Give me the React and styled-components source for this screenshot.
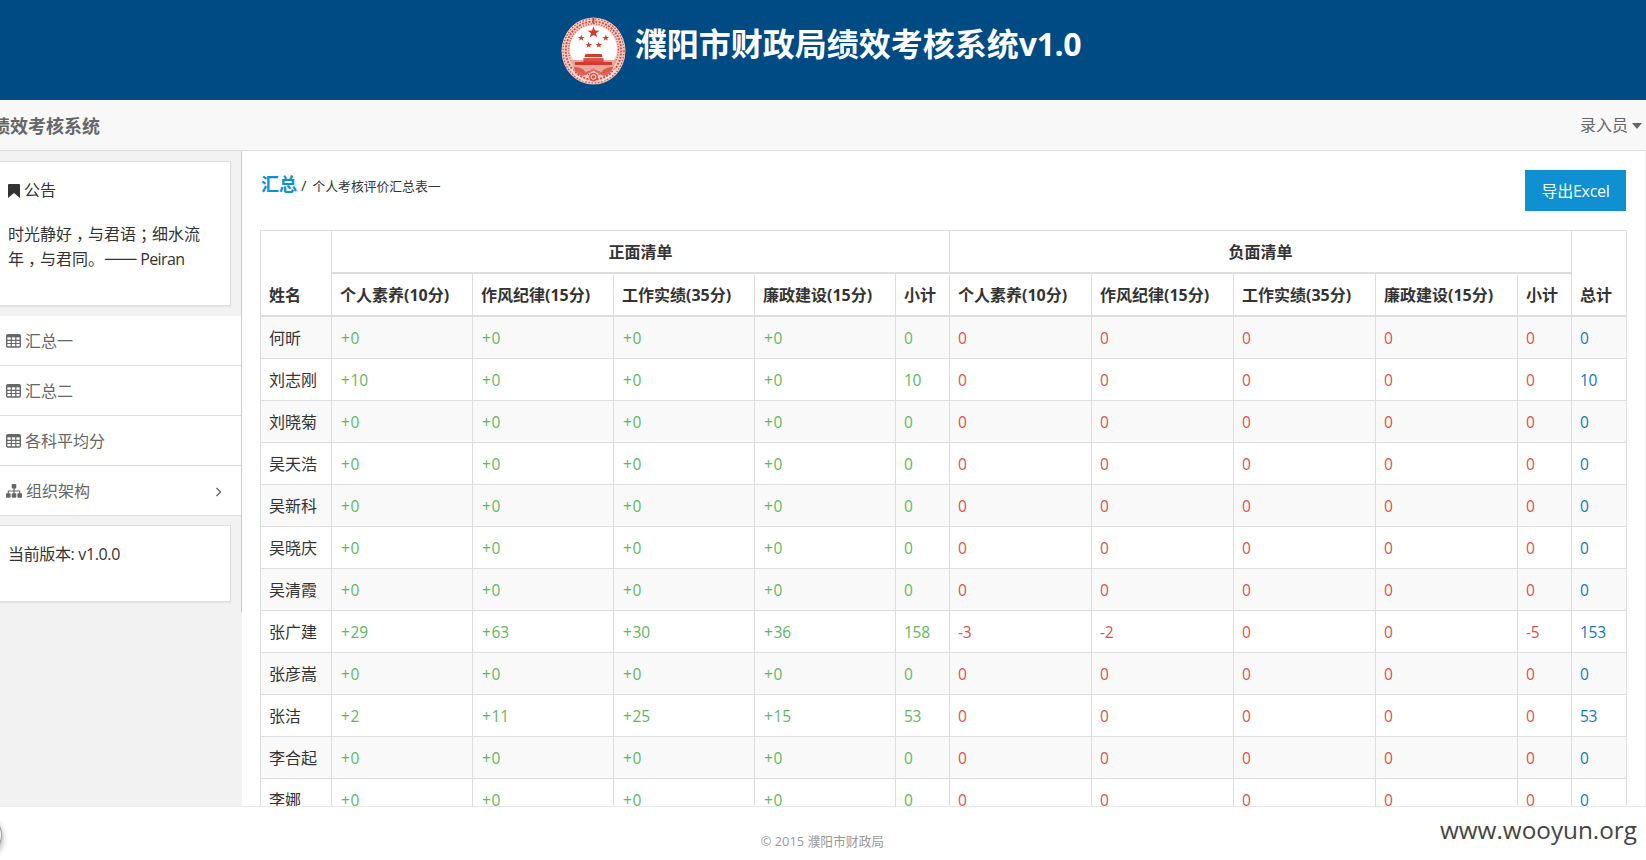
import React from 'react';
import styled, { createGlobalStyle, css } from 'styled-components';

const Global = createGlobalStyle`
  * { box-sizing: border-box; }
  body { margin: 0; background: #fff; overflow: hidden; }
  #root {
    font-family: "Open Sans", "Noto Sans CJK SC", sans-serif;
    font-size: 16px; line-height: 25.6px; color: #333;
  }
`;

const Page = styled.div`
  height: 860px; display: flex; flex-direction: column; overflow: hidden; position: relative;
`;
const Banner = styled.header`
  height: 100px; flex: none; background: #004b84; display: flex; justify-content: center;
  padding: 17px 4px 0 0; gap: 9px;
`;
const Title = styled.h1`
  margin: 1px 0 0; color: #fff; font-size: 32px; line-height: 51px; font-weight: 700;
  white-space: nowrap; height: 51px;
  span { letter-spacing: -0.4px; }
`;
const TopBar = styled.div`
  height: 51px; flex: none; display: flex; justify-content: space-between; align-items: center;
  background: #f8f8f8; border-bottom: 1px solid #ddd; color: #666; padding: 2px 4px 0 0;
`;
const Brand = styled.strong`
  font-size: 18px; margin-left: -8px; white-space: nowrap; padding-top: 1px;
`;
const UserMenu = styled.div`
  display: flex; align-items: center; gap: 4px;
`;
const Caret = styled.i`
  border: 5px solid transparent; border-top: 6px solid #666; border-bottom: 0;
`;
const Body = styled.div`
  height: 655px; flex: none; display: flex; overflow: hidden;
`;
const Sidebar = styled.aside`
  width: 242px; flex: none; background: #f2f2f2;
`;
const SideInner = styled.div`
  height: 461px; border-right: 1px solid #ccc; padding-top: 10px;
`;
const Card = styled.section`
  width: 231px; height: ${p => p.$h}px; background: #fff; border: 1px solid #ddd; border-left: 0;
  box-shadow: 0 1px 1px rgba(0,0,0,.05); padding: ${p => p.$pad}px 20px 0 8px;
  p { margin: 0; letter-spacing: ${p => p.$tight || 0}px; white-space: nowrap; }
`;
const CardTitle = styled.div`
  display: flex; align-items: center; gap: 4px; margin-bottom: 18px;
`;
const Punct = styled.span`
  padding: 0 4px; font-feature-settings: "halt";
`;
const Dash = styled.span`
  display: inline-block; width: 32px; font-family: "Noto Sans CJK SC", sans-serif;
  font-size: 20px; line-height: 16px; height: 16px; letter-spacing: 0;
`;
const Author = styled.span`
  letter-spacing: -0.6px;
`;
const Nav = styled.nav`
  margin: 10px 0 9px; background: #fff;
`;
const NavItem = styled.a`
  height: 50px; display: flex; align-items: center; gap: 4px; padding: 2px 19px 0 6px;
  color: #666; border-bottom: 1px solid #ddd;
  > svg { margin-bottom: 1px; }
`;
const Push = styled.span`
  margin-left: auto; display: flex;
`;
const Main = styled.main`
  flex: 1; min-width: 0; background: #fff; border-right: 1px solid #eee; padding: 19px 18px 0;
`;
const Toolbar = styled.div`
  display: flex; justify-content: space-between; align-items: flex-start; height: 60px;
`;
const Crumbs = styled.div`
  display: flex; align-items: baseline; padding: 2px 0 0 1px; font-size: 12.8px;
  strong { font-size: 18px; color: #0e90d2; margin-right: 4px; }
  i { font-size: 15px; font-style: normal; }
  small { font-size: 12.8px; margin-left: 6px; }
`;
const Export = styled.button`
  width: 101px; height: 41px; border: 0; padding: 2px 0 0; margin-right: 1px; background: #0e90d2; color: #fff;
  font: inherit; white-space: nowrap; letter-spacing: -0.3px;
`;
const Table = styled.table`
  table-layout: fixed; width: 1367px; border-collapse: separate; border-spacing: 0;
  border-right: 1px solid #ddd; color: #333;
  tbody tr:nth-child(odd) { background: #f9f9f9; }
`;
const cell = css`
  border-left: 1px solid #ddd; border-top: 1px solid #ddd; padding: 0 8px; text-align: left;
  white-space: nowrap;
`;
const Th = styled.th`
  ${cell}
  height: 43px; border-bottom: 1px solid #ddd; font-weight: 700; vertical-align: bottom;
  padding-bottom: 6px;
  text-align: ${p => (p.$center ? 'center' : 'left')};
`;
const tones = { good: '#5eb95e', bad: '#dd514c', total: '#0e78c2', name: '#333' };
const Td = styled.td`
  ${cell}
  height: 42px; vertical-align: middle; color: ${p => tones[p.$tone]};
  padding-top: 3px;
  ${p => p.$tone !== 'name' && 'letter-spacing: -0.3px; font-size: 15.5px;'}
`;
const Plus = styled.span`
  padding-left: 1px; letter-spacing: 0.7px;
`;
const Footer = styled.footer`
  flex: 1; border-top: 1px solid #e8e8e8; background: #fff; color: #999; font-size: 12.8px;
  display: flex; justify-content: center; align-items: center; padding: 17px 1px 0 0;
`;
const Watermark = styled.div`
  position: absolute; right: 9px; bottom: 10px; font-size: 24.3px; line-height: 40px; color: #444;
`;
const RoundButton = styled.div`
  position: absolute; left: -40px; bottom: 4px; width: 42px; height: 42px; border-radius: 50%;
  border: 1px solid #999; background: #fff; box-shadow: 0 3px 6px rgba(0,0,0,.4);
`;

const star = (cx, cy, r) =>
  Array.from({ length: 10 }, (_, i) => {
    const a = -Math.PI / 2 + (i * Math.PI) / 5;
    const q = i % 2 ? r * 0.4 : r;
    return `${(cx + q * Math.cos(a)).toFixed(2)},${(cy + q * Math.sin(a)).toFixed(2)}`;
  }).join(' ');

const Emblem = () => (
  <svg width="65" height="68" viewBox="0 0 61 68" preserveAspectRatio="none">
    <ellipse cx="30.5" cy="34" rx="30" ry="33.5" fill="#f3cdc6" />
    <g fill="none" stroke="#cf4b3c">
      <ellipse cx="30.5" cy="34" rx="28.6" ry="32" strokeWidth="1.2" strokeDasharray="1.4 1.6" />
      <ellipse cx="30.5" cy="33.5" rx="26" ry="29" strokeWidth="1.8" strokeDasharray="1.8 1.4" />
      <ellipse cx="30.5" cy="32.5" rx="23.4" ry="25.6" strokeWidth="1.3" strokeDasharray="1 1.5" />
    </g>
    <ellipse cx="30.5" cy="31.5" rx="22" ry="23" fill="#fff" />
    <path d="M9 43h43l-2 6q-5 8-11 6l-8.5-4-8.5 4q-8 1-11-6z" fill="#e9a89e" />
    <g fill="#d43a2b">
      <polygon points={star(30.5, 15.5, 6)} />
      <polygon points={star(19, 21, 3.4)} />
      <polygon points={star(42, 21, 3.4)} />
      <polygon points={star(26, 28, 3.3)} />
      <polygon points={star(35.5, 28, 3.3)} />
      <path d="M23 37h15l1 3H22z" />
      <path d="M21 41h19v4H21z" opacity=".85" />
      <path d="M13 45h35v3H13z" />
      <path d="M12 50q8 0 11 5l7.500-4 7.500 4q3-5 11-5-2 8-9 9l-9.500-5-9.500 5q-8-1-9-9z" opacity=".7" />
      <circle cx="30.5" cy="60" r="4.2" opacity=".8" />
    </g>
    <circle cx="30.5" cy="60" r="2.2" fill="none" stroke="#f7d7d0" />
    <path d="M15 59l7 5M46 59l-7 5M10 52l5 8M51 52l-5 8" stroke="#fbe6e2" strokeWidth="1.2" />
    <path d="M30.5 1v6" stroke="#d43a2b" strokeWidth="1.5" />
  </svg>
);
const TableIcon = () => (
  <svg width="15" height="14" viewBox="0 0 15 14">
    <rect x=".7" y=".7" width="13.6" height="12.3" rx="1.2" fill="none" stroke="#666" strokeWidth="1.4" />
    <path d="M.6 6.300h13.800M.6 9.500h13.800M5.300 2v11M9.800 2v11" stroke="#666" strokeWidth="1.2" />
    <path d="M1 1h13v2.300H1z" fill="#666" />
  </svg>
);
const SitemapIcon = () => (
  <svg width="16" height="14" viewBox="0 0 16 14" fill="#666">
    <rect x="5.7" y="0" width="4.6" height="4.4" rx=".8" />
    <rect x="0" y="9.3" width="4.6" height="4.4" rx=".8" />
    <rect x="5.7" y="9.3" width="4.6" height="4.4" rx=".8" />
    <rect x="11.4" y="9.3" width="4.6" height="4.4" rx=".8" />
    <path d="M8 4v6M2.300 10V7h11.400v3" fill="none" stroke="#666" strokeWidth="1.2" />
  </svg>
);
const BookmarkIcon = () => (
  <svg width="12" height="14" viewBox="0 0 12 14">
    <path d="M1 0h10q1 0 1 1v13l-6-5-6 5V1q0-1 1-1z" fill="#333" />
  </svg>
);
const ChevronIcon = () => (
  <svg width="7" height="10" viewBox="0 0 7 10">
    <path d="M1.500 1l4 4-4 4" fill="none" stroke="#666" strokeWidth="1.4" />
  </svg>
);

const widths = [71, 141, 141, 141, 141, 54, 142, 142, 142, 142, 54, 55];
const groups = [['个人素养', '10'], ['作风纪律', '15'], ['工作实绩', '35'], ['廉政建设', '15']];
const zero = ['+0', '+0', '+0', '+0', '0', '0', '0', '0', '0', '0', '0'];
const rows = [
  ['何昕', ...zero],
  ['刘志刚', '+10', '+0', '+0', '+0', '10', '0', '0', '0', '0', '0', '10'],
  ['刘晓菊', ...zero],
  ['吴天浩', ...zero],
  ['吴新科', ...zero],
  ['吴晓庆', ...zero],
  ['吴清霞', ...zero],
  ['张广建', '+29', '+63', '+30', '+36', '158', '-3', '-2', '0', '0', '-5', '153'],
  ['张彦嵩', ...zero],
  ['张洁', '+2', '+11', '+25', '+15', '53', '0', '0', '0', '0', '0', '53'],
  ['李合起', ...zero],
  ['李娜', ...zero],
];
const toneOf = i => (i === 0 ? 'name' : i < 6 ? 'good' : i < 11 ? 'bad' : 'total');

const Value = ({ v }) => (v[0] === '+' ? <><Plus>+</Plus>{v.slice(1)}</> : v);

const SubHeads = () => (
  <>
    {groups.map(([n, s]) => <Th key={n}>{n}({s}分)</Th>)}
    <Th>小计</Th>
  </>
);

export default function App() {
  return (
    <Page>
      <Global />
      <Banner>
        <Emblem />
        <Title>濮阳市财政局绩效考核系统<span>v1.0</span></Title>
      </Banner>
      <TopBar>
        <Brand>绩效考核系统</Brand>
        <UserMenu>录入员<Caret /></UserMenu>
      </TopBar>
      <Body>
        <Sidebar>
          <SideInner>
            <Card $h={145} $pad={16}>
              <CardTitle><BookmarkIcon />公告</CardTitle>
              <p>
                时光静好<Punct>，</Punct>与君语<Punct>；</Punct>细水流<br />
                年<Punct>，</Punct>与君同。<Dash>——</Dash> <Author>Peiran</Author>
              </p>
            </Card>
            <Nav>
              <NavItem><TableIcon />汇总一</NavItem>
              <NavItem><TableIcon />汇总二</NavItem>
              <NavItem><TableIcon />各科平均分</NavItem>
              <NavItem><SitemapIcon />组织架构<Push><ChevronIcon /></Push></NavItem>
            </Nav>
            <Card $h={77} $pad={16} $tight={-0.35}><p>当前版本: v1.0.0</p></Card>
          </SideInner>
        </Sidebar>
        <Main>
          <Toolbar>
            <Crumbs><strong>汇总</strong><i>/</i><small>个人考核评价汇总表一</small></Crumbs>
            <Export>导出Excel</Export>
          </Toolbar>
          <Table>
            <colgroup>{widths.map((w, i) => <col key={i} width={w} />)}</colgroup>
            <thead>
              <tr>
                <Th rowSpan={2}>姓名</Th>
                <Th colSpan={5} $center>正面清单</Th>
                <Th colSpan={5} $center>负面清单</Th>
                <Th rowSpan={2}>总计</Th>
              </tr>
              <tr><SubHeads /><SubHeads /></tr>
            </thead>
            <tbody>
              {rows.map(r => (
                <tr key={r[0]}>
                  {r.map((v, i) => <Td key={i} $tone={toneOf(i)}><Value v={v} /></Td>)}
                </tr>
              ))}
            </tbody>
          </Table>
        </Main>
      </Body>
      <Footer>© 2015 濮阳市财政局</Footer>
      <Watermark>www.wooyun.org</Watermark>
      <RoundButton />
    </Page>
  );
}
